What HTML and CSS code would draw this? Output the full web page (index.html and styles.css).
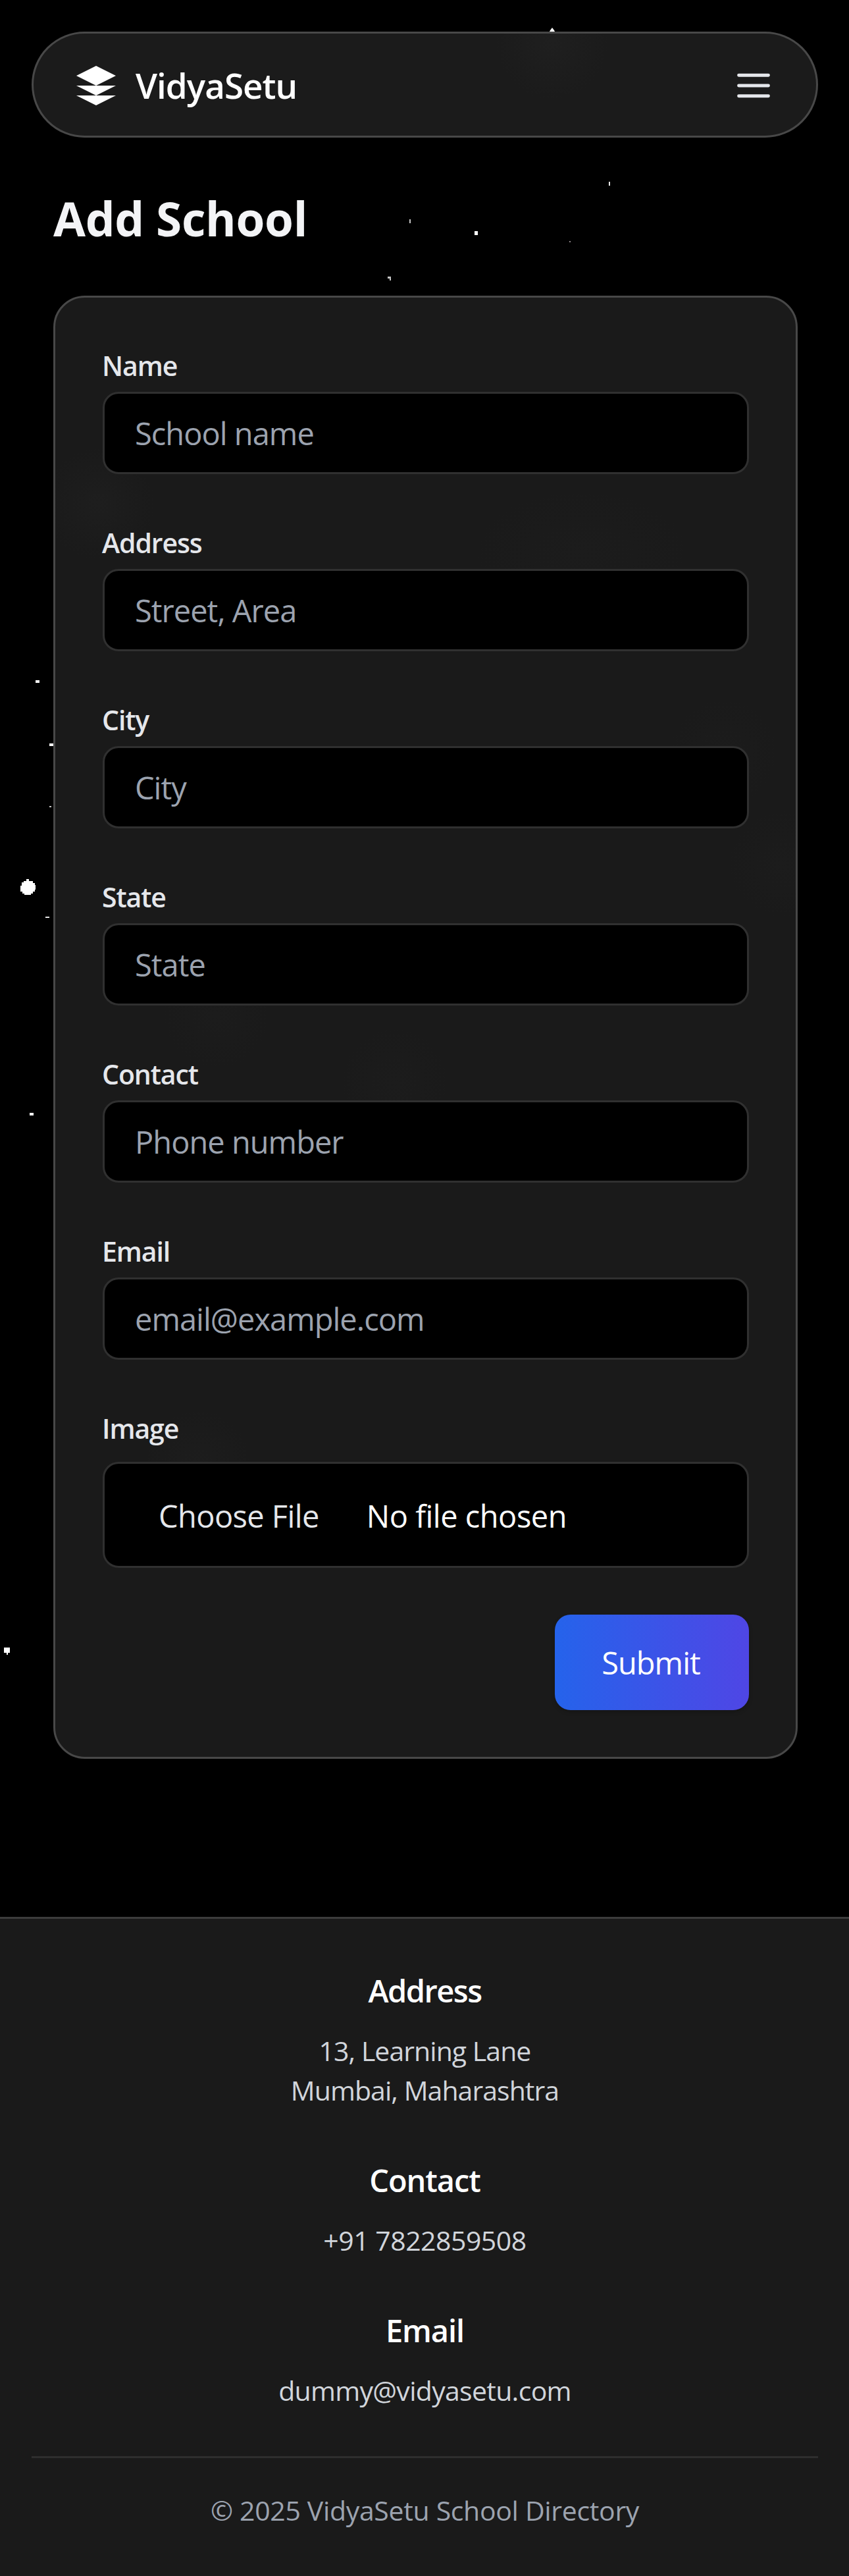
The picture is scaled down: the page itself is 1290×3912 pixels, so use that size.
FILE: index.html
```
<!DOCTYPE html>
<html lang="en">
<head>
<meta charset="utf-8">
<title>VidyaSetu – Add School</title>
<link rel="stylesheet" href="styles.css">
</head>
<body>
<svg class="stars" viewBox="0 0 1290 3912" aria-hidden="true">
  <path d="M839 42l3 4 1 2h-8l1-2z"/>
  <rect class="dim" x="622" y="333" width="2" height="6"/>
  <path class="dim" d="M589 420h5v6h-2v-3h-3z"/>
  <rect class="bright" x="925" y="276" width="2" height="6"/>
  <rect x="721" y="351" width="5" height="6"/>
  <rect class="faint" x="865" y="366" width="2" height="2"/>
  <rect class="faint" x="283" y="338" width="3" height="4"/>
  <rect x="54" y="1033" width="6" height="4"/>
  <rect x="75" y="1129" width="6" height="4"/>
  <rect class="dim" x="75" y="1224" width="3" height="2"/>
  <path d="M40 1335h4v3h6v3h3v3h1v7h-1v3h-3v3h-3v2H37v-2h-3v-3h-3v-9h2v-5h3v-2h4z"/>
  <rect class="bright" x="69" y="1392" width="6" height="2"/>
  <rect x="45" y="1690" width="6" height="4"/>
  <path d="M6 2502h9v8h-3v3h-2v-3H6z"/>
</svg>
<nav class="navbar">
  <a class="brand">
    <svg class="icon" viewBox="0 0 24 24" fill="#fff"><path d="M12 2L2 7l10 5 10-5z"/><path d="M2 12h20l-10 5z"/><path d="M2 17h20l-10 5z"/></svg>
    <span class="brand-name">VidyaSetu</span>
  </a>
  <svg class="icon" viewBox="0 0 24 24" fill="none" stroke="#e5e7eb" stroke-width="1.6" stroke-linecap="round"><path d="M4.5 6.75h15M4.5 12h15M4.5 17.25h15"/></svg>
</nav>
<main class="main">
  <h1 class="title">Add School</h1>
  <form class="card">
    <div class="field"><label class="label" for="name">Name</label><input class="input" id="name" placeholder="School name"></div>
    <div class="field"><label class="label" for="address">Address</label><input class="input" id="address" placeholder="Street, Area"></div>
    <div class="field"><label class="label" for="city">City</label><input class="input" id="city" placeholder="City"></div>
    <div class="field"><label class="label" for="state">State</label><input class="input" id="state" placeholder="State"></div>
    <div class="field"><label class="label" for="contact">Contact</label><input class="input" id="contact" placeholder="Phone number"></div>
    <div class="field"><label class="label" for="email">Email</label><input class="input" id="email" placeholder="email@example.com"></div>
    <div class="field field-file"><span class="label">Image</span>
      <label class="file"><input type="file" hidden><span class="file-button">Choose File</span><span class="file-name">No file chosen</span></label>
    </div>
    <div class="actions"><button class="submit" type="button">Submit</button></div>
  </form>
</main>
<footer class="footer">
  <section class="block"><h2 class="block-title tight">Address</h2><p class="block-text">13, Learning Lane<br>Mumbai, Maharashtra</p></section>
  <section class="block"><h2 class="block-title">Contact</h2><p class="block-text phone">+91 7822859508</p></section>
  <section class="block"><h2 class="block-title">Email</h2><p class="block-text mail">dummy@vidyasetu.com</p></section>
  <p class="copyright">© 2025 VidyaSetu School Directory</p>
</footer>
</body>
</html>
```
FILE: styles.css
```
* { box-sizing: border-box; margin: 0; padding: 0; }
body {
  position: relative;
  width: 1290px;
  height: 3912px;
  display: flex;
  flex-direction: column;
  background: #000;
  color: #fff;
  font-family: "Segoe UI", "Open Sans", "Noto Sans", sans-serif;
}
.stars { position: absolute; inset: 0; width: 1290px; height: 3912px; fill: #fff; }
.stars .bright { fill: #e6e6e6; }
.stars .dim { fill: #c4c4c4; }
.stars .faint { fill: #8c8488; }
.navbar, .main, .footer { position: relative; }

.navbar {
  margin: 48px 47px 0 48px;
  height: 161px;
  padding: 2px 59px 0 59px;
  display: flex;
  align-items: center;
  justify-content: space-between;
  border: 3px solid #484848;
  border-radius: 81px;
  background: radial-gradient(circle 85px at 788px 15px, #1f1f1f, #1b1b1b) #1b1b1b;
}
.brand { display: flex; align-items: center; gap: 24px; }
.icon { width: 72px; height: 72px; display: block; }
.brand-name { font-size: 53px; font-weight: 620; line-height: 84px; letter-spacing: -1px; }

.main { padding: 78px 78px 0 81px; }
.title { font-size: 71px; font-weight: 700; line-height: 90px; letter-spacing: -0.3px; color: #f3f4f6; }

.card {
  margin-top: 72px;
  height: 2222px;
  padding: 72px;
  display: flex;
  flex-direction: column;
  gap: 73px;
  border: 3px solid #484848;
  border-radius: 48px;
  background:
    radial-gradient(circle 85px at 66px 313px, #1e1e1e, transparent),
    radial-gradient(ellipse 160px 90px at 800px 385px, #1c1c1c, transparent),
    radial-gradient(circle 80px at 1016px 690px, #1c1c1c, transparent),
    radial-gradient(circle 80px at 1105px 860px, #1c1c1c, transparent),
    radial-gradient(circle 80px at 245px 1090px, #1c1c1c, transparent),
    radial-gradient(circle 80px at 516px 1190px, #1c1c1c, transparent),
    radial-gradient(circle 80px at 216px 1770px, #1d1d1d, transparent),
    #1a1a1a;
}
.field { display: flex; flex-direction: column; gap: 10px; }
.field-file { gap: 21px; }
.label { padding-top: 1px; font-size: 41px; font-weight: 620; line-height: 60px; letter-spacing: -1.1px; color: #e5e7eb; margin-left: -1px; }
.input, .file {
  width: 982px;
  border: 3px solid #303030;
  border-radius: 24px;
  background: #000;
  color: #fff;
  font: 400 47px "Segoe UI", "Open Sans", "Noto Sans", sans-serif;
}
.input { height: 125px; padding: 1px 46px 0; letter-spacing: -0.98px; outline: none; }
.input::placeholder { color: #9ca3af; opacity: 1; }
.file { height: 161px; padding: 2px 82px 0; display: flex; align-items: center; gap: 72px; }
.file-button { color: #e5e7eb; letter-spacing: -0.6px; }
.file-name { letter-spacing: -0.5px; }

.actions { display: flex; justify-content: flex-end; margin: -2px -1px 0 0; }
.submit {
  width: 295px;
  height: 145px;
  padding-right: 3px;
  border: 0;
  border-radius: 24px;
  background: linear-gradient(to right, #2563eb, #4f46e5);
  box-shadow: 0 3px 6px rgba(0, 0, 0, 0.2);
  color: #fff;
  font: 400 47px "Segoe UI", "Open Sans", "Noto Sans", sans-serif;
  letter-spacing: -0.97px;
}

.footer {
  margin-top: 240px;
  height: 1001px;
  padding: 73px 47px 0 48px;
  display: flex;
  flex-direction: column;
  gap: 71px;
  border-top: 3px solid #3c3c3c;
  background: #1a1a1a;
  text-align: center;
}
.block { display: flex; flex-direction: column; gap: 25px; }
.block-title { font-size: 47px; font-weight: 620; line-height: 72px; letter-spacing: -1.1px; }
.tight { letter-spacing: -1.5px; }
.block-text { font-size: 41px; line-height: 60px; letter-spacing: -0.95px; color: #d1d5db; }
.phone { letter-spacing: -0.5px; }
.mail { letter-spacing: -0.7px; }
.copyright {
  margin-top: -1px;
  padding-top: 49px;
  border-top: 3px solid #2e2e2e;
  font-size: 41px;
  line-height: 60px;
  letter-spacing: -0.33px;
  color: #9ca3af;
}
```
